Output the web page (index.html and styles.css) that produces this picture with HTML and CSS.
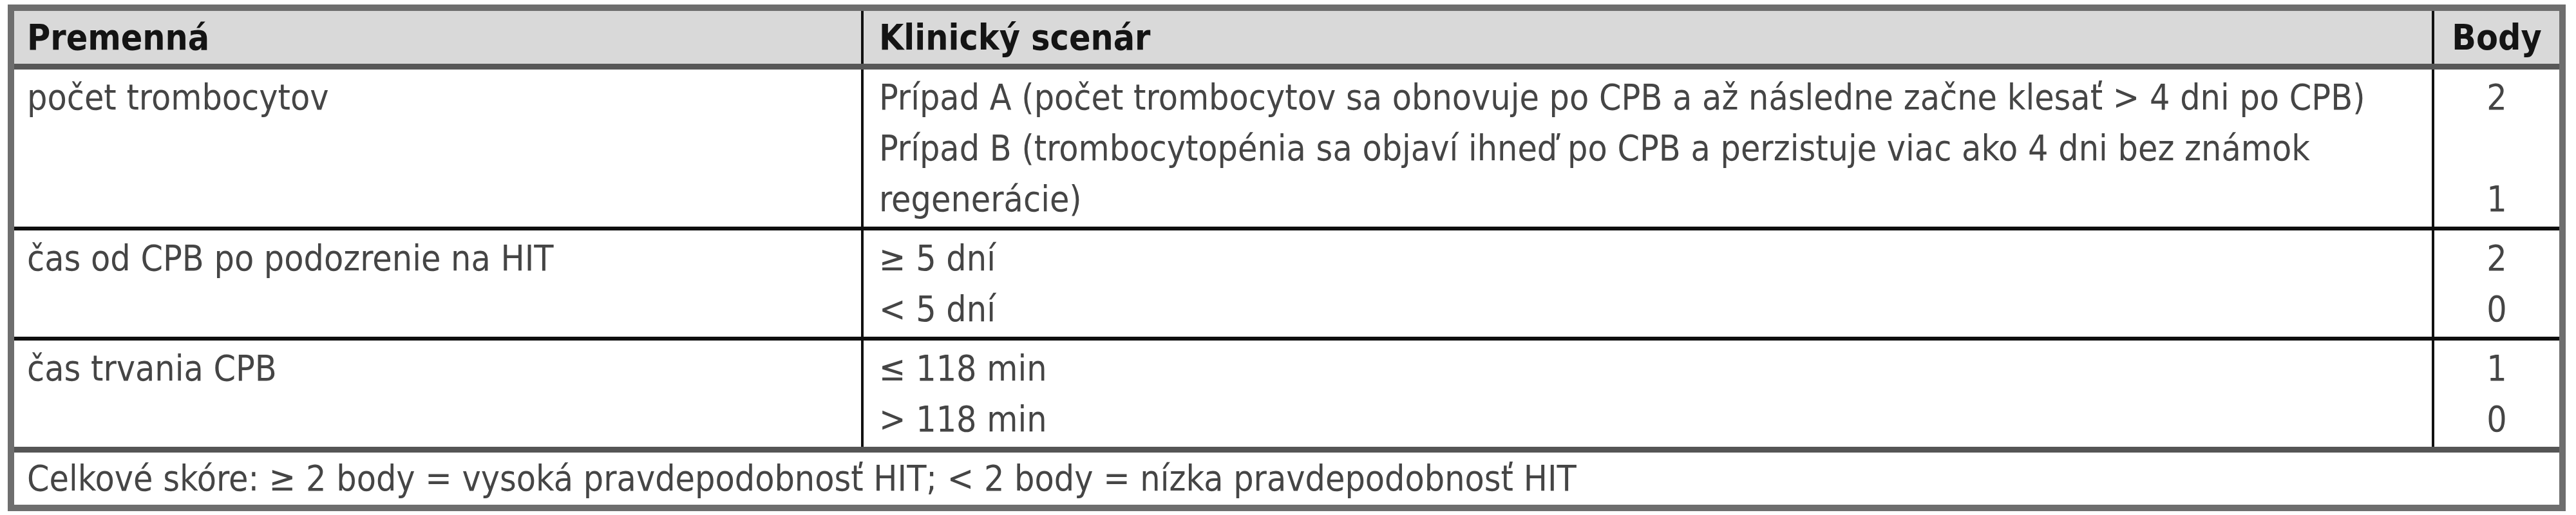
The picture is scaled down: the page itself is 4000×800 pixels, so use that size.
FILE: index.html
```html
<!DOCTYPE html>
<html lang="sk">
<head>
<meta charset="utf-8">
<title>Skóre HIT po CPB</title>
<link rel="stylesheet" href="styles.css">
</head>
<body>
<table class="score">
  <colgroup>
    <col class="c-var">
    <col class="c-scen">
    <col class="c-pts">
  </colgroup>
  <thead>
    <tr class="head">
      <th class="var">Premenná</th>
      <th class="scen">Klinický scenár</th>
      <th class="pts">Body</th>
    </tr>
  </thead>
  <tbody>
    <tr class="row">
      <td class="var">počet trombocytov</td>
      <td class="scen">Prípad A (počet trombocytov sa obnovuje po CPB a až následne začne klesať &gt; 4 dni po CPB)<br>Prípad B (trombocytopénia sa objaví ihneď po CPB a perzistuje viac ako 4 dni bez známok<br>regenerácie)</td>
      <td class="pts">2<br><br>1</td>
    </tr>
    <tr class="row">
      <td class="var">čas od CPB po podozrenie na HIT</td>
      <td class="scen">≥ 5 dní<br>&lt; 5 dní</td>
      <td class="pts">2<br>0</td>
    </tr>
    <tr class="row last">
      <td class="var">čas trvania CPB</td>
      <td class="scen">≤ 118 min<br>&gt; 118 min</td>
      <td class="pts">1<br>0</td>
    </tr>
  </tbody>
  <tfoot>
    <tr class="foot">
      <td colspan="3">Celkové skóre: ≥ 2 body = vysoká pravdepodobnosť HIT; &lt; 2 body = nízka pravdepodobnosť HIT</td>
    </tr>
  </tfoot>
</table>
</body>
</html>
```

FILE: styles.css
```css
html, body {
  margin: 0;
  padding: 0;
  background: #ffffff;
}

body {
  padding: 7px 0 0 12px;
}

.score {
  border-collapse: collapse;
  width: 3972px;
  table-layout: fixed;
  font-family: "Liberation Sans Narrow", "DejaVu Sans Condensed", "Liberation Sans", sans-serif;
  font-size: 55px;
  line-height: 79px;
  color: #454545;
  border: 10px solid #6e6e6e;
}

.c-var { width: 1322px; }
.c-scen { width: 2439px; }
.c-pts { width: auto; }

.score th,
.score td {
  vertical-align: top;
  text-align: left;
  padding: 4px 20px 3px 20px;
}

.score .var {
  padding-left: 20px;
}

.score .scen {
  border-left: 4px solid #111111;
  padding-left: 24px;
}

.score .pts {
  border-left: 4px solid #111111;
  text-align: center;
  padding-left: 0;
  padding-right: 0;
}

.head th {
  background: #d9d9d9;
  color: #141414;
  font-weight: bold;
  padding-top: 2px;
  padding-bottom: 1px;
  border-bottom: 9px solid #585858;
}

.row td {
  border-bottom: 6px solid #0e0e0e;
}

.row.last td {
  border-bottom: 9px solid #555555;
}

.foot td {
  padding-top: 1px;
  padding-bottom: 1px;
}
```
